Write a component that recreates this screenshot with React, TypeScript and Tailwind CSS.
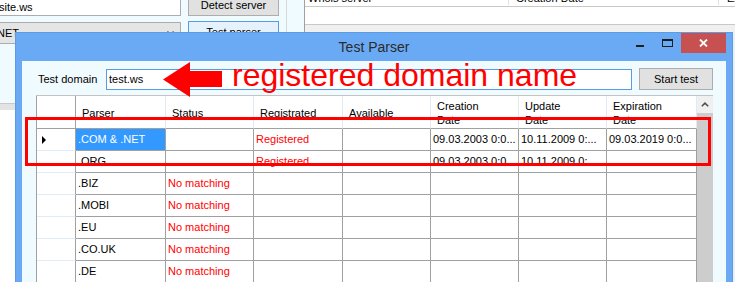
import React from "react";

type Row = [string, string, string, string, string, string, string];

const headers: string[][] = [
  ["Parser"],
  ["Status"],
  ["Registrated"],
  ["Available"],
  ["Creation", "Date"],
  ["Update", "Date"],
  ["Expiration", "Date"],
];

const rows: Row[] = [
  [".COM & .NET", "", "Registered", "", "09.03.2003 0:0...", "10.11.2009 0:...", "09.03.2019 0:0..."],
  [".ORG", "", "Registered", "", "09.03.2003 0:0...", "10.11.2009 0:...", ""],
  [".BIZ", "No matching", "", "", "", "", ""],
  [".MOBI", "No matching", "", "", "", "", ""],
  [".EU", "No matching", "", "", "", "", ""],
  [".CO.UK", "No matching", "", "", "", "", ""],
  [".DE", "No matching", "", "", "", "", ""],
];

const MainWindow: React.FC = () => {
  return (
    <div className="flex h-full">
      {/* domain input + parser combo */}
      <div className="flex w-[181px] shrink-0 flex-col">
        <div className="flex h-[16px] items-center border-b border-r border-[#abadb3] bg-white">
          <span className="-ml-[1px]">site.ws</span>
        </div>
        <div className="mt-[6px] flex h-[22px] items-center justify-between border-y border-r border-[#acacac] bg-[#e5e5e5] pr-[6px]">
          <span className="-ml-[6px]">.NET</span>
          <svg width="7" height="4" viewBox="0 0 7 4">
            <path d="M0.5 0.5 L3.5 3.5 L6.5 0.5" fill="none" stroke="#404040" strokeWidth="1.2" />
          </svg>
        </div>
        <div className="mt-[59px] h-[7px] border-t border-[#c9c9c9] bg-[#e3e3e3]" />
        <div className="flex-1 bg-white" />
      </div>

      {/* buttons */}
      <div className="ml-[7px] flex w-[91px] shrink-0 flex-col">
        <div className="-mt-[6px] flex h-[22px] items-center justify-center border border-[#adadad] bg-[#e1e1e1]">
          Detect server
        </div>
        <div className="mt-[5px] flex h-[22px] items-center justify-center border border-[#569de5] bg-[#e5f1fb]">
          Test parser
        </div>
      </div>

      {/* whois grid */}
      <div className="ml-[7px] flex flex-1 border-l border-[#d9d9d9] pl-[17px]">
        <div className="flex flex-1 flex-col border-l border-[#a0a0a0]">
          <div className="flex h-[7px] overflow-hidden border-b border-[#c8c8c8] bg-white">
            <div className="-mt-[9px] h-[14px] w-[204px] shrink-0 whitespace-nowrap border-r border-[#e3e3e3] pl-[3px] leading-[14px]">
              Whois server
            </div>
            <div className="-mt-[9px] h-[14px] w-[210px] shrink-0 whitespace-nowrap border-r border-[#e3e3e3] pl-[7px] leading-[14px]">
              Creation Date
            </div>
            <div className="-mt-[9px] h-[14px] whitespace-nowrap pl-[8px] leading-[14px]">Expiration</div>
          </div>
          <div className="h-[18px] border-b border-[#c8c8c8] bg-white" />
          <div className="flex-1 bg-[#f0f0f0]" />
        </div>
      </div>
    </div>
  );
};

const ParserGrid: React.FC = () => {
  return (
    <div className="ml-[14px] mt-[5px] flex w-[677px] border-t border-[#c3c3c3]">
      <div className="grid flex-1 grid-cols-[39px_90px_88px_89px_88px_88px_88px_90px] content-start border-l border-[#a0a0a0] bg-white">
        <div className="h-[33px] border-b border-r border-[#a0a0a0]" />
        {headers.map((h, i) => (
          <div
            key={i}
            className="flex h-[33px] flex-col justify-center border-b border-r border-b-[#a0a0a0] border-r-[#e1e9f2] pl-[6px] pt-[2px] leading-[14px]"
          >
            {h.map((line) => (
              <span key={line}>{line}</span>
            ))}
          </div>
        ))}
        {rows.map((row, r) => (
          <React.Fragment key={r}>
            <div className="flex h-[22px] items-center border-b border-r border-b-[#e1ebf6] border-r-[#a0a0a0] pl-[5px]">
              {r === 0 && (
                <span className="h-0 w-0 border-y-[4px] border-l-[4px] border-y-transparent border-l-black" />
              )}
            </div>
            {row.map((cell, c) => {
              const selected = r === 0 && c === 0;
              const red = cell === "Registered" || cell === "No matching";
              return (
                <div
                  key={c}
                  className={
                    "flex h-[22px] items-center overflow-hidden whitespace-nowrap border-b border-r border-[#a0a0a0] pl-[2px] " +
                    (selected ? "bg-[#3399ff] text-white" : red ? "text-[#ff0000]" : "")
                  }
                >
                  {cell}
                </div>
              );
            })}
          </React.Fragment>
        ))}
      </div>
      <div className="flex w-[16px] flex-col">
        <div className="flex h-[17px] items-center justify-center bg-[#f0f0f0]">
          <svg width="8" height="5" viewBox="0 0 8 5">
            <path d="M0.8 4.3 L4 1.2 L7.2 4.3" fill="none" stroke="#505050" strokeWidth="1.6" />
          </svg>
        </div>
        <div className="flex-1 bg-[#cdcdcd]" />
      </div>
    </div>
  );
};

const TestParserDialog: React.FC = () => {
  return (
    <div className="absolute left-[15px] top-[32px] flex h-[262px] w-[718px] flex-col border border-[#5b9ce6] bg-[#6aaaf4]">
      <div className="grid h-[28px] grid-cols-[1fr_auto_1fr]">
        <div />
        <div className="text-[14px] leading-[28px] text-[#2b2b2b]">Test Parser</div>
        <div className="flex items-start justify-end pr-[6px]">
          <div className="mt-[12px] h-[2px] w-[8px] bg-[#1e1e1e]" />
          <div className="ml-[18px] mt-[6px] h-[8px] w-[11px] border border-t-2 border-[#1e1e1e]" />
          <div className="ml-[8px] flex h-[20px] w-[45px] items-center justify-center bg-[#c75050]">
            <svg width="9" height="8" viewBox="0 0 9 8">
              <path d="M1 0.5 L8 7.5 M8 0.5 L1 7.5" stroke="#ffffff" strokeWidth="1.8" />
            </svg>
          </div>
        </div>
      </div>
      <div className="mx-[6px] flex flex-1 flex-col bg-[#f0fbff]">
        <div className="mt-[7px] flex h-[22px] items-center pl-[16px]">
          <span className="w-[68px]">Test domain</span>
          <div className="flex h-[21px] w-[526px] items-center border border-[#569de5] bg-white pl-[2px]">
            test.ws
          </div>
          <div className="ml-[7px] flex h-[22px] w-[74px] items-center justify-center border border-[#adadad] bg-[#e1e1e1]">
            Start test
          </div>
        </div>
        <ParserGrid />
      </div>
    </div>
  );
};

const Annotation: React.FC = () => {
  return (
    <>
      <svg className="absolute left-[163px] top-[62px]" width="60" height="36" viewBox="0 0 60 36">
        <polygon points="0,17.5 27,0 27,9 59,9 59,25 27,25 27,35" fill="#ff0000" />
      </svg>
      <div className="absolute left-[232px] top-[59px] whitespace-nowrap text-[32px] leading-[32px] text-[#ff0000]">
        registered domain name
      </div>
      <div className="absolute left-[25px] top-[117px] h-[49px] w-[686px] border-[3px] border-[#ff0000]" />
    </>
  );
};

export default function App() {
  return (
    <div className="relative h-[282px] w-[735px] overflow-hidden bg-[#f0fbff] font-['Liberation_Sans',Arial,sans-serif] text-[11px] text-black">
      <MainWindow />
      <TestParserDialog />
      <Annotation />
    </div>
  );
}
